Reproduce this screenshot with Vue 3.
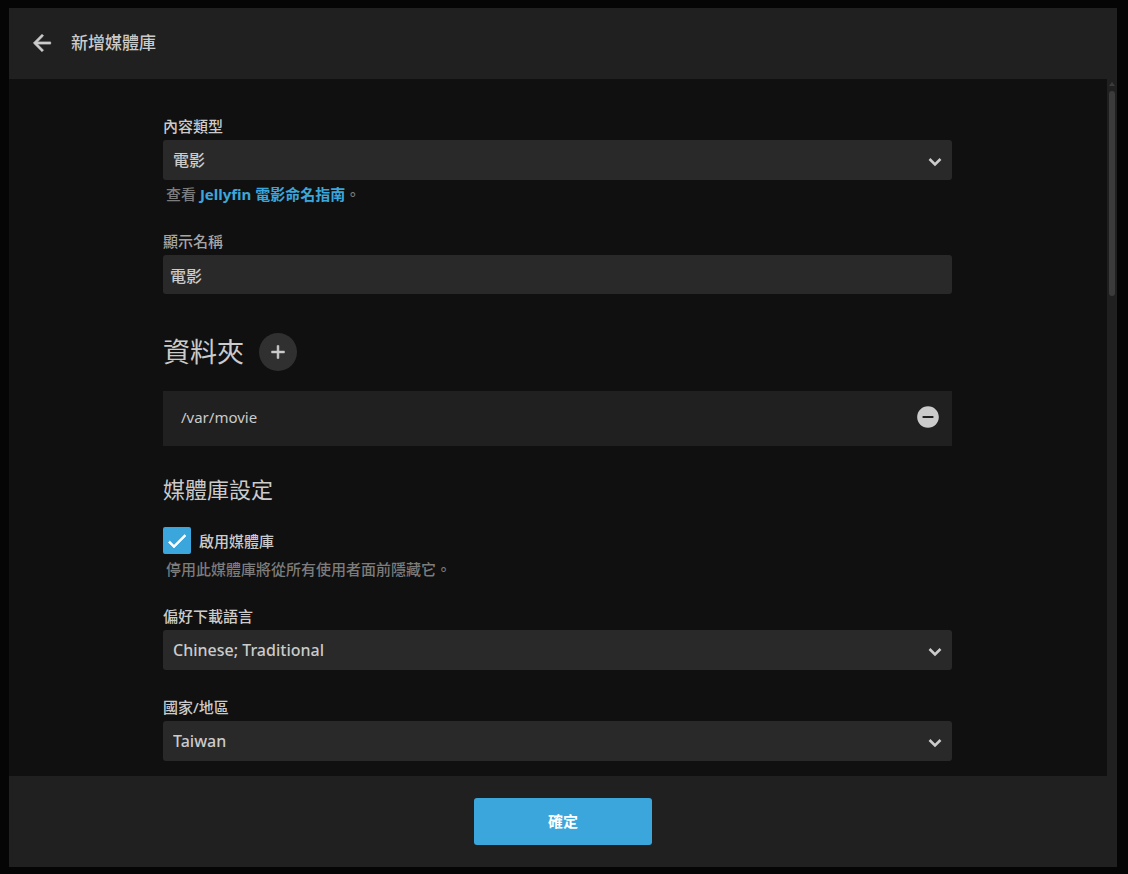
<script setup>
import { ref } from 'vue'

const contentType = ref('電影')
const displayName = ref('電影')
const folders = ref(['/var/movie'])
const enabled = ref(true)
const language = ref('Chinese; Traditional')
const country = ref('Taiwan')
</script>

<template>
  <div class="page" lang="zh-TW">
    <form class="dialog" @submit.prevent>
      <header class="header">
        <button type="button" class="back" aria-label="返回">
          <svg viewBox="0 0 24 24"><path d="M20 11H7.83l5.59-5.59L12 4l-8 8 8 8 1.41-1.41L7.83 13H20v-2z" /></svg>
        </button>
        <h1 class="title">新增媒體庫</h1>
      </header>

      <div class="middle">
        <main class="content">
          <div class="field">
            <label class="label" for="content-type">內容類型</label>
            <div class="select-wrap">
              <select id="content-type" v-model="contentType" class="control select">
                <option>電影</option>
              </select>
              <svg class="chevron" viewBox="0 0 14 10"><path d="M1.5 2 7 7.5 12.500 2" /></svg>
            </div>
            <p class="help">查看 <a href="#">Jellyfin 電影命名指南</a>。</p>
          </div>

          <div class="field">
            <label class="label muted" for="display-name">顯示名稱</label>
            <input id="display-name" v-model="displayName" class="control input" type="text" />
          </div>

          <section class="folders">
            <div class="folders-head">
              <h2 class="folders-title">資料夾</h2>
              <button type="button" class="add" aria-label="新增資料夾">
                <svg viewBox="0 0 24 24"><path d="M19 13h-6v6h-2v-6H5v-2h6V5h2v6h6v2z" /></svg>
              </button>
            </div>
            <div v-for="folder in folders" :key="folder" class="folder">
              <span>{{ folder }}</span>
              <button type="button" class="remove" aria-label="移除">
                <svg viewBox="0 0 24 24"><path d="M12 2C6.480 2 2 6.480 2 12s4.480 10 10 10 10-4.480 10-10S17.520 2 12 2zm5 11H7v-2h10v2z" /></svg>
              </button>
            </div>
          </section>

          <h2 class="settings-title">媒體庫設定</h2>

          <div class="field">
            <label class="check">
              <input v-model="enabled" type="checkbox" class="box" />
              <svg class="tick" viewBox="0 0 24 24"><path d="M9 16.170 4.830 12l-1.420 1.410L9 19 21 7l-1.410-1.410z" /></svg>
              <span>啟用媒體庫</span>
            </label>
            <p class="help">停用此媒體庫將從所有使用者面前隱藏它。</p>
          </div>

          <div class="field">
            <label class="label" for="language">偏好下載語言</label>
            <div class="select-wrap">
              <select id="language" v-model="language" class="control select">
                <option>Chinese; Traditional</option>
              </select>
              <svg class="chevron" viewBox="0 0 14 10"><path d="M1.5 2 7 7.5 12.500 2" /></svg>
            </div>
          </div>

          <div class="field">
            <label class="label" for="country">國家/地區</label>
            <div class="select-wrap">
              <select id="country" v-model="country" class="control select">
                <option>Taiwan</option>
              </select>
              <svg class="chevron" viewBox="0 0 14 10"><path d="M1.5 2 7 7.5 12.500 2" /></svg>
            </div>
          </div>
        </main>
        <div class="scrollbar" aria-hidden="true">
          <svg class="scroll-up" viewBox="0 0 6 4"><path d="M3 0 6 4H0z" /></svg>
          <div class="thumb"></div>
        </div>
      </div>

      <footer class="footer">
        <button type="submit" class="submit">確定</button>
      </footer>
    </form>
  </div>
</template>

<style>
body {
  margin: 0;
  background: #050505;
}
</style>

<style scoped>
.page {
  box-sizing: border-box;
  height: 100vh;
  padding: 8px 11px 7px 9px;
  background: #050505;
  color: #cbcbcb;
  font-family: "Noto Sans", "Noto Sans CJK TC", sans-serif;
  font-size: 15px;
  font-weight: 500;
  line-height: 20px;
}

.page *,
.page *::before {
  box-sizing: border-box;
}

.dialog {
  display: flex;
  flex-direction: column;
  height: 100%;
  background: #202020;
}

button {
  display: flex;
  align-items: center;
  justify-content: center;
  border: 0;
  padding: 0;
  background: none;
  color: inherit;
  font: inherit;
  cursor: pointer;
}

svg {
  display: block;
  fill: currentColor;
}

.header {
  display: flex;
  flex: none;
  align-items: center;
  gap: 16px;
  height: 71px;
  padding: 0 20px 2px;
}

.back svg {
  width: 26px;
  height: 26px;
  stroke: currentColor;
  stroke-width: 0.6;
}

.title {
  margin: 0;
  font-size: 17px;
  font-weight: 500;
  line-height: 24px;
}

.middle {
  display: flex;
  flex: 1;
  min-height: 0;
}

.content {
  flex: 1;
  min-width: 0;
  overflow-y: auto;
  scrollbar-width: none;
  padding: 37px min(155px, 15%) 15px min(154px, 15%);
  background: #101010;
}

.field {
  margin-bottom: 27px;
}

.field:last-child {
  margin-bottom: 0;
}

.label {
  display: block;
  margin-bottom: 4px;
}

.muted {
  color: #a5a5a5;
}

.control {
  display: block;
  width: 100%;
  height: 40px;
  border: 0;
  border-radius: 3px;
  background: #292929;
  color: #cbcbcb;
  font-family: inherit;
  font-size: 16px;
  font-weight: 500;
  outline: none;
}

.select-wrap {
  display: grid;
  align-items: center;
}

.select-wrap > * {
  grid-area: 1 / 1;
}

.select {
  appearance: none;
  padding: 0 40px 0 10px;
}

.chevron {
  justify-self: end;
  width: 14px;
  height: 10px;
  margin: 4px 10px 0 0;
  fill: none;
  stroke: currentColor;
  stroke-width: 2.6;
  pointer-events: none;
}

.input {
  height: 39px;
  padding: 0 7px;
}

.help {
  margin: 4px 0 0;
  padding-left: 3px;
  color: #7c7c7c;
}

.help a {
  color: #3ba6dc;
  font-weight: 700;
  text-decoration: none;
}

.folders-head {
  display: flex;
  align-items: center;
  gap: 15px;
  margin-top: 39px;
}

.folders-title {
  margin: 0;
  font-size: 27px;
  font-weight: 400;
  line-height: 36px;
}

.add {
  width: 38px;
  height: 38px;
  border-radius: 50%;
  background: #303030;
}

.add svg {
  width: 22px;
  height: 22px;
  stroke: currentColor;
  stroke-width: 0.6;
}

.folder {
  display: flex;
  align-items: center;
  justify-content: space-between;
  height: 55px;
  margin-top: 20px;
  padding: 0 11px 4px 18px;
  background: #202020;
  font-weight: 400;
}

.remove svg {
  width: 26px;
  height: 26px;
}

.settings-title {
  margin: 28px 0 23px;
  font-size: 22px;
  font-weight: 400;
  line-height: 30px;
}

.check {
  display: grid;
  grid-template-columns: 28px 1fr;
  align-items: center;
  column-gap: 8px;
  height: 28px;
}

.box {
  grid-area: 1 / 1;
  appearance: none;
  align-self: start;
  width: 28px;
  height: 27px;
  margin: 0;
  border: 2px solid #858585;
  border-radius: 2px;
}

.box:checked {
  border-color: #3ba6dc;
  background: #3ba6dc;
}

.tick {
  grid-area: 1 / 1;
  justify-self: center;
  width: 24px;
  height: 24px;
  color: #fff;
  stroke: currentColor;
  stroke-width: 0.6;
  visibility: hidden;
  pointer-events: none;
}

.box:checked + .tick {
  visibility: visible;
}

.scrollbar {
  display: flex;
  flex: none;
  flex-direction: column;
  align-items: center;
  width: 10px;
  padding-top: 3px;
}

.scroll-up {
  width: 6px;
  height: 4px;
  color: #3b3b3b;
}

.thumb {
  width: 6px;
  height: 205px;
  margin-top: 5px;
  border-radius: 3px;
  background: #3b3b3b;
}

.footer {
  display: flex;
  flex: none;
  justify-content: center;
  padding: 22px;
}

.submit {
  width: 178px;
  height: 47px;
  padding-bottom: 2px;
  border-radius: 3px;
  background: #3ba6dc;
  color: #fff;
  font-weight: 700;
}
</style>
